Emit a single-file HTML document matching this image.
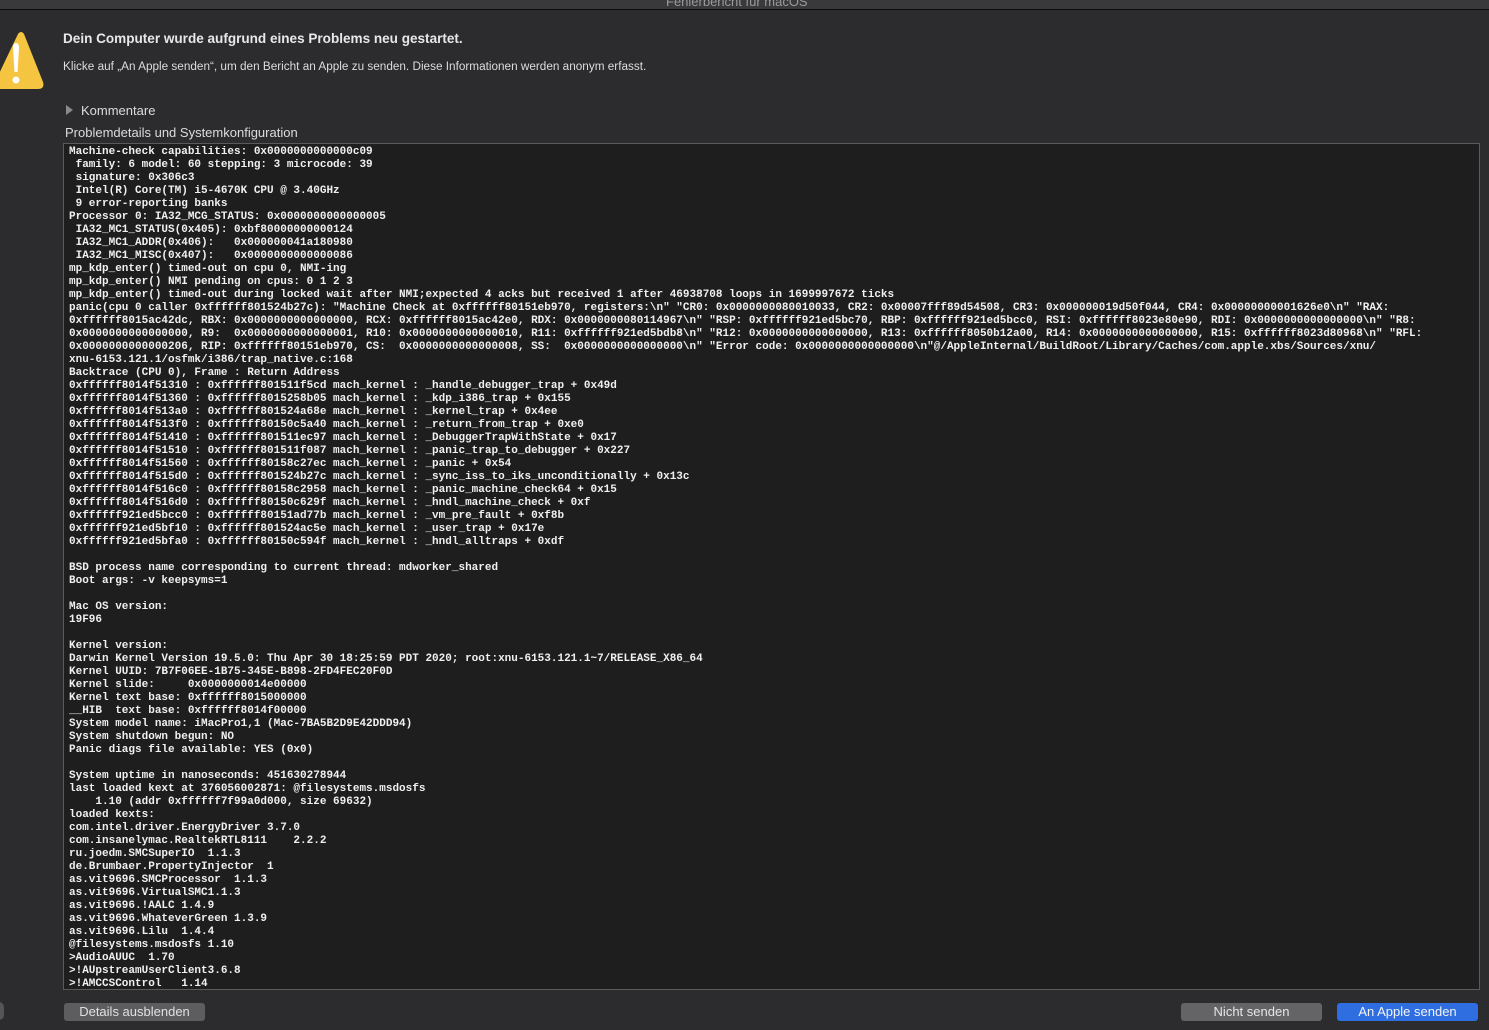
<!DOCTYPE html>
<html><head><meta charset="utf-8">
<style>
html,body{margin:0;padding:0;}
body{width:1489px;height:1030px;background:#2c2c2e;position:relative;overflow:hidden;font-family:"Liberation Sans",sans-serif;color:#e5e5e5;}
.top{position:absolute;left:0;top:0;width:1489px;height:9px;background:#39393b;border-bottom:1px solid #0a0a0a;overflow:hidden;}
.top span{position:absolute;left:666px;top:-6px;font-size:13px;color:#9a9a9a;}
.h1{position:absolute;left:63px;top:31px;font-size:13.55px;font-weight:bold;color:#e8e8e8;}
.p{position:absolute;left:63px;top:60px;font-size:11.75px;color:#dcdcdc;}
.k{position:absolute;left:81px;top:103px;font-size:13px;color:#dcdcdc;}
.tri{position:absolute;left:66px;top:105px;width:0;height:0;border-left:7px solid #8a8a8a;border-top:5px solid transparent;border-bottom:5px solid transparent;}
.pd{position:absolute;left:65px;top:125px;font-size:13px;color:#dcdcdc;}
.box{position:absolute;left:63px;top:143px;width:1415px;height:845px;background:#1e1e1e;border:1px solid #5a5a5a;overflow:hidden;}
pre{margin:0;padding:2px 0 0 5px;font-family:"Liberation Mono",monospace;font-size:11px;line-height:13px;color:#f0f0f0;font-weight:bold;white-space:pre;}
.btn{position:absolute;top:1003px;height:18px;border-radius:3px;font-size:13px;text-align:center;line-height:18px;}
</style></head><body>
<div class="top"><span>Fehlerbericht für macOS</span></div>
<svg style="position:absolute;left:-6px;top:30px" width="52" height="62" viewBox="0 0 52 62">
<path d="M24 4 Q27 0 30 4 L49 52 Q51 59 44 59 L6 59 Q-1 59 1 52 Z" fill="#f5c542"/>
<path d="M19 18 Q19 13 22 13 Q25 13 25 18 L23.5 42 L20.5 42 Z" fill="#fff"/>
<circle cx="22" cy="50" r="3.5" fill="#fff"/>
</svg>
<div class="h1">Dein Computer wurde aufgrund eines Problems neu gestartet.</div>
<div class="p">Klicke auf „An Apple senden“, um den Bericht an Apple zu senden. Diese Informationen werden anonym erfasst.</div>
<div class="tri"></div>
<div class="k">Kommentare</div>
<div class="pd">Problemdetails und Systemkonfiguration</div>
<div class="box"><pre>Machine-check capabilities: 0x0000000000000c09
 family: 6 model: 60 stepping: 3 microcode: 39
 signature: 0x306c3
 Intel(R) Core(TM) i5-4670K CPU @ 3.40GHz
 9 error-reporting banks
Processor 0: IA32_MCG_STATUS: 0x0000000000000005
 IA32_MC1_STATUS(0x405): 0xbf80000000000124
 IA32_MC1_ADDR(0x406):   0x000000041a180980
 IA32_MC1_MISC(0x407):   0x0000000000000086
mp_kdp_enter() timed-out on cpu 0, NMI-ing
mp_kdp_enter() NMI pending on cpus: 0 1 2 3
mp_kdp_enter() timed-out during locked wait after NMI;expected 4 acks but received 1 after 46938708 loops in 1699997672 ticks
panic(cpu 0 caller 0xffffff801524b27c): "Machine Check at 0xffffff80151eb970, registers:\n" "CR0: 0x0000000080010033, CR2: 0x00007fff89d54508, CR3: 0x000000019d50f044, CR4: 0x00000000001626e0\n" "RAX:
0xffffff8015ac42dc, RBX: 0x0000000000000000, RCX: 0xffffff8015ac42e0, RDX: 0x0000000080114967\n" "RSP: 0xffffff921ed5bc70, RBP: 0xffffff921ed5bcc0, RSI: 0xffffff8023e80e90, RDI: 0x0000000000000000\n" "R8:
0x0000000000000000, R9:  0x0000000000000001, R10: 0x0000000000000010, R11: 0xffffff921ed5bdb8\n" "R12: 0x0000000000000000, R13: 0xffffff8050b12a00, R14: 0x0000000000000000, R15: 0xffffff8023d80968\n" "RFL:
0x0000000000000206, RIP: 0xffffff80151eb970, CS:  0x0000000000000008, SS:  0x0000000000000000\n" "Error code: 0x0000000000000000\n"@/AppleInternal/BuildRoot/Library/Caches/com.apple.xbs/Sources/xnu/
xnu-6153.121.1/osfmk/i386/trap_native.c:168
Backtrace (CPU 0), Frame : Return Address
0xffffff8014f51310 : 0xffffff801511f5cd mach_kernel : _handle_debugger_trap + 0x49d
0xffffff8014f51360 : 0xffffff8015258b05 mach_kernel : _kdp_i386_trap + 0x155
0xffffff8014f513a0 : 0xffffff801524a68e mach_kernel : _kernel_trap + 0x4ee
0xffffff8014f513f0 : 0xffffff80150c5a40 mach_kernel : _return_from_trap + 0xe0
0xffffff8014f51410 : 0xffffff801511ec97 mach_kernel : _DebuggerTrapWithState + 0x17
0xffffff8014f51510 : 0xffffff801511f087 mach_kernel : _panic_trap_to_debugger + 0x227
0xffffff8014f51560 : 0xffffff80158c27ec mach_kernel : _panic + 0x54
0xffffff8014f515d0 : 0xffffff801524b27c mach_kernel : _sync_iss_to_iks_unconditionally + 0x13c
0xffffff8014f516c0 : 0xffffff80158c2958 mach_kernel : _panic_machine_check64 + 0x15
0xffffff8014f516d0 : 0xffffff80150c629f mach_kernel : _hndl_machine_check + 0xf
0xffffff921ed5bcc0 : 0xffffff80151ad77b mach_kernel : _vm_pre_fault + 0xf8b
0xffffff921ed5bf10 : 0xffffff801524ac5e mach_kernel : _user_trap + 0x17e
0xffffff921ed5bfa0 : 0xffffff80150c594f mach_kernel : _hndl_alltraps + 0xdf

BSD process name corresponding to current thread: mdworker_shared
Boot args: -v keepsyms=1

Mac OS version:
19F96

Kernel version:
Darwin Kernel Version 19.5.0: Thu Apr 30 18:25:59 PDT 2020; root:xnu-6153.121.1~7/RELEASE_X86_64
Kernel UUID: 7B7F06EE-1B75-345E-B898-2FD4FEC20F0D
Kernel slide:     0x0000000014e00000
Kernel text base: 0xffffff8015000000
__HIB  text base: 0xffffff8014f00000
System model name: iMacPro1,1 (Mac-7BA5B2D9E42DDD94)
System shutdown begun: NO
Panic diags file available: YES (0x0)

System uptime in nanoseconds: 451630278944
last loaded kext at 376056002871: @filesystems.msdosfs
    1.10 (addr 0xffffff7f99a0d000, size 69632)
loaded kexts:
com.intel.driver.EnergyDriver 3.7.0
com.insanelymac.RealtekRTL8111    2.2.2
ru.joedm.SMCSuperIO  1.1.3
de.Brumbaer.PropertyInjector  1
as.vit9696.SMCProcessor  1.1.3
as.vit9696.VirtualSMC1.1.3
as.vit9696.!AALC 1.4.9
as.vit9696.WhateverGreen 1.3.9
as.vit9696.Lilu  1.4.4
@filesystems.msdosfs 1.10
>AudioAUUC  1.70
>!AUpstreamUserClient3.6.8
>!AMCCSControl   1.14
</pre></div>
<div style="position:absolute;left:-6px;top:1002px;width:10px;height:18px;border-radius:9px;background:#555"></div>
<div class="btn" style="left:64px;width:141px;background:#5d5d5f;color:#e0e0e0;">Details ausblenden</div>
<div class="btn" style="left:1181px;width:141px;background:#646466;color:#e6e6e6;">Nicht senden</div>
<div class="btn" style="left:1337px;width:141px;background:#2f6ee0;color:#f4f4f4;">An Apple senden</div>
</body></html>
